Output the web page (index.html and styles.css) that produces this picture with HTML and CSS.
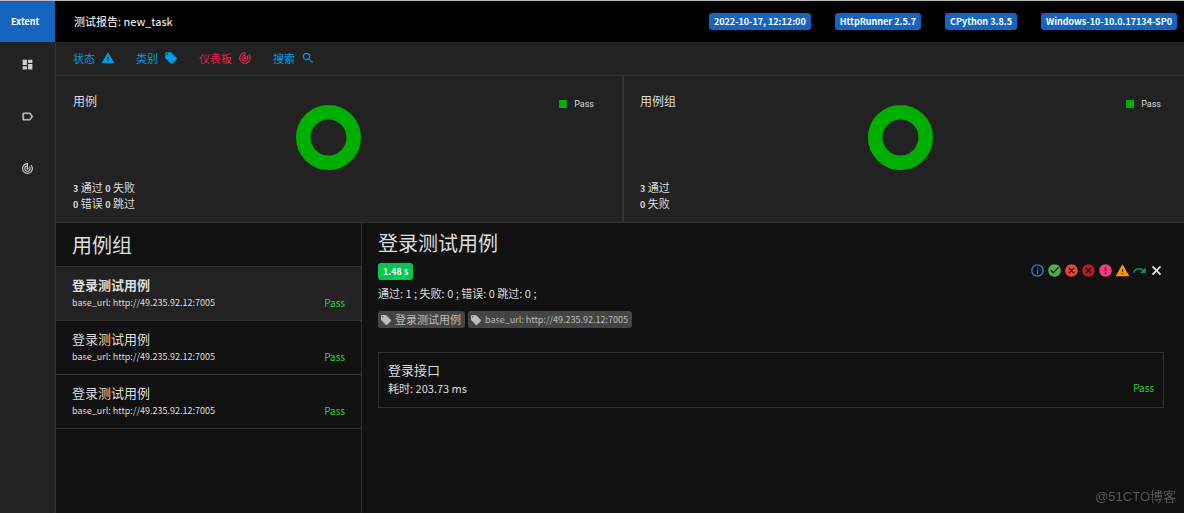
FILE: index.html
```html
<!DOCTYPE html>
<html lang="zh-CN">
<head>
<meta charset="utf-8">
<meta name="viewport" content="width=device-width, initial-scale=1">
<title>测试报告: new_task</title>
<link rel="stylesheet" href="styles.css">
</head>
<body>
<svg class="sprite" aria-hidden="true">
  <symbol id="dashboard" viewBox="0 0 24 24"><path d="M3 13h8V3H3v10zm0 8h8v-6H3v6zm10 0h8V11h-8v10zm0-18v6h8V3h-8z"/></symbol>
  <symbol id="label" viewBox="0 0 24 24"><path stroke="currentColor" stroke-width="0.8" d="M17.63 5.84C17.27 5.33 16.67 5 16 5L5 5.01C3.9 5.01 3 5.9 3 7v10c0 1.1.9 1.99 2 1.99L16 19c.67 0 1.27-.33 1.63-.84L22 12l-4.37-6.16zM16 17H5V7h11l3.55 5L16 17z"/></symbol>
  <symbol id="track" viewBox="0 0 24 24"><path d="M19.07 4.93l-1.41 1.41C19.1 7.79 20 9.79 20 12c0 4.42-3.58 8-8 8s-8-3.58-8-8c0-4.08 3.05-7.44 7-7.93v2.02C8.16 6.57 6 9.03 6 12c0 3.31 2.69 6 6 6s6-2.69 6-6c0-1.66-.67-3.16-1.76-4.24l-1.41 1.41C15.55 9.9 16 10.9 16 12c0 2.21-1.79 4-4 4s-4-1.79-4-4c0-1.86 1.28-3.41 3-3.86v2.14c-.6.35-1 .98-1 1.72 0 1.1.9 2 2 2s2-.9 2-2c0-.74-.4-1.38-1-1.72V2h-1C6.48 2 2 6.48 2 12s4.48 10 10 10 10-4.48 10-10c0-2.76-1.12-5.26-2.93-7.07z"/></symbol>
  <symbol id="warning" viewBox="0 0 24 24"><path d="M1 21h22L12 2 1 21zm12-3h-2v-2h2v2zm0-4h-2v-4h2v4z"/></symbol>
  <symbol id="tag" viewBox="0 0 24 24"><path d="M21.41 11.58l-9-9C12.05 2.22 11.55 2 11 2H4c-1.1 0-2 .9-2 2v7c0 .55.22 1.05.59 1.42l9 9c.36.36.86.58 1.41.58.55 0 1.05-.22 1.41-.59l7-7c.37-.36.59-.86.59-1.41 0-.55-.23-1.06-.59-1.42zM5.5 7C4.67 7 4 6.33 4 5.5S4.67 4 5.5 4 7 4.67 7 5.5 6.33 7 5.5 7z"/></symbol>
  <symbol id="search" viewBox="0 0 24 24"><path d="M15.5 14h-.79l-.28-.27C15.41 12.59 16 11.11 16 9.5 16 5.91 13.09 3 9.5 3S3 5.91 3 9.5 5.91 16 9.5 16c1.61 0 3.09-.59 4.23-1.57l.27.28v.79l5 4.99L20.49 19l-4.99-5zm-6 0C7.01 14 5 11.99 5 9.5S7.01 5 9.5 5 14 7.01 14 9.5 11.99 14 9.5 14z"/></symbol>
  <symbol id="info" viewBox="0 0 24 24"><path d="M11 17h2v-6h-2v6zm1-15C6.48 2 2 6.48 2 12s4.48 10 10 10 10-4.48 10-10S17.52 2 12 2zm0 18c-4.41 0-8-3.59-8-8s3.59-8 8-8 8 3.59 8 8-3.59 8-8 8zM11 9h2V7h-2v2z"/></symbol>
  <symbol id="check" viewBox="0 0 24 24"><path d="M12 2C6.48 2 2 6.48 2 12s4.48 10 10 10 10-4.48 10-10S17.52 2 12 2zm-2 15l-5-5 1.41-1.41L10 14.17l7.59-7.59L19 8l-9 9z"/></symbol>
  <symbol id="cancel" viewBox="0 0 24 24"><path d="M12 2C6.47 2 2 6.47 2 12s4.47 10 10 10 10-4.47 10-10S17.53 2 12 2zm5 13.59L15.59 17 12 13.41 8.41 17 7 15.59 10.59 12 7 8.41 8.41 7 12 10.59 15.59 7 17 8.41 13.41 12 17 15.59z"/></symbol>
  <symbol id="error" viewBox="0 0 24 24"><path d="M12 2C6.48 2 2 6.48 2 12s4.48 10 10 10 10-4.48 10-10S17.52 2 12 2zm1 15h-2v-2h2v2zm0-4h-2V7h2v6z"/></symbol>
  <symbol id="redo" viewBox="0 0 24 24"><path d="M18.4 10.6C16.55 8.99 14.15 8 11.5 8c-4.65 0-8.58 3.03-9.96 7.22L3.9 16c1.05-3.19 4.05-5.5 7.6-5.5 1.95 0 3.73.72 5.12 1.88L13 16h9V7l-3.6 3.6z"/></symbol>
  <symbol id="close" viewBox="0 0 24 24"><path stroke="currentColor" stroke-width="0.8" d="M19 6.41L17.59 5 12 10.59 6.41 5 5 6.41 10.59 12 5 17.59 6.41 19 12 13.41 17.59 19 19 17.59 13.41 12z"/></symbol>
  <symbol id="donut" viewBox="0 0 65 65"><circle cx="32.5" cy="32.5" r="25.2" fill="none" stroke="#00af00" stroke-width="14.6"/></symbol>
</svg>

<div class="app">
  <header class="topbar">
    <a class="brand" href="#">Extent</a>
    <h1 class="report-name">测试报告: new_task</h1>
    <ul class="env">
      <li class="badge">2022-10-17, 12:12:00</li>
      <li class="badge">HttpRunner 2.5.7</li>
      <li class="badge">CPython 3.8.5</li>
      <li class="badge">Windows-10-10.0.17134-SP0</li>
    </ul>
  </header>

  <div class="body">
    <nav class="side" aria-label="视图">
      <a href="#" aria-label="用例组"><svg class="icon"><use href="#dashboard"/></svg></a>
      <a href="#" aria-label="类别"><svg class="icon"><use href="#label"/></svg></a>
      <a href="#" aria-label="仪表板"><svg class="icon"><use href="#track"/></svg></a>
    </nav>

    <main class="main">
      <nav class="toolbar" aria-label="工具">
        <a href="#">状态<svg class="icon"><use href="#warning"/></svg></a>
        <a href="#">类别<svg class="icon"><use href="#tag"/></svg></a>
        <a href="#" class="active">仪表板<svg class="icon"><use href="#track"/></svg></a>
        <a href="#">搜索<svg class="icon"><use href="#search"/></svg></a>
      </nav>

      <div class="charts">
        <section class="card">
          <div class="chart">
            <h2>用例</h2>
            <svg class="donut" role="img" aria-label="Pass"><use href="#donut"/></svg>
            <span class="legend">Pass</span>
          </div>
          <p><b>3</b> 通过 <b>0</b> 失败</p>
          <p><b>0</b> 错误 <b>0</b> 跳过</p>
        </section>
        <section class="card card-groups">
          <div class="chart">
            <h2>用例组</h2>
            <svg class="donut" role="img" aria-label="Pass"><use href="#donut"/></svg>
            <span class="legend">Pass</span>
          </div>
          <p><b>3</b> 通过</p>
          <p><b>0</b> 失败</p>
        </section>
      </div>

      <div class="panes">
        <section class="suites">
          <h2 class="heading">用例组</h2>
          <ul>
            <li class="suite selected">
              <h3>登录测试用例</h3>
              <div class="row"><span>base_url: http://49.235.92.12:7005</span><span class="pass">Pass</span></div>
            </li>
            <li class="suite">
              <h3>登录测试用例</h3>
              <div class="row"><span>base_url: http://49.235.92.12:7005</span><span class="pass">Pass</span></div>
            </li>
            <li class="suite">
              <h3>登录测试用例</h3>
              <div class="row"><span>base_url: http://49.235.92.12:7005</span><span class="pass">Pass</span></div>
            </li>
          </ul>
        </section>

        <section class="detail">
          <h2 class="heading">登录测试用例</h2>
          <div class="meta">
            <span class="badge time">1.48 s</span>
            <div class="filters">
              <button type="button" class="c-info" aria-label="信息"><svg class="icon"><use href="#info"/></svg></button>
              <button type="button" class="c-pass" aria-label="通过"><svg class="icon"><use href="#check"/></svg></button>
              <button type="button" class="c-fail" aria-label="失败"><svg class="icon"><use href="#cancel"/></svg></button>
              <button type="button" class="c-fatal" aria-label="致命"><svg class="icon"><use href="#cancel"/></svg></button>
              <button type="button" class="c-error" aria-label="错误"><svg class="icon"><use href="#error"/></svg></button>
              <button type="button" class="c-warn" aria-label="警告"><svg class="icon"><use href="#warning"/></svg></button>
              <button type="button" class="c-skip" aria-label="跳过"><svg class="icon"><use href="#redo"/></svg></button>
              <button type="button" class="c-clear" aria-label="清除"><svg class="icon"><use href="#close"/></svg></button>
            </div>
          </div>
          <p class="counts">通过: 1 ; 失败: 0 ; 错误: 0 跳过: 0 ;</p>
          <div class="tags">
            <span class="tag tag-name"><svg class="icon"><use href="#tag"/></svg>登录测试用例</span>
            <span class="tag"><svg class="icon"><use href="#tag"/></svg>base_url: http://49.235.92.12:7005</span>
          </div>
          <article class="test">
            <h3>登录接口</h3>
            <div class="row"><span class="elapsed">耗时: 203.73 ms</span><span class="pass">Pass</span></div>
          </article>
        </section>
      </div>
    </main>
  </div>
</div>
<div class="watermark">@51CTO博客</div>
</body>
</html>
```

FILE: styles.css
```css
* { box-sizing: border-box; }

body {
  margin: 0;
  background: #111;
  color: #ddd;
  font: 9px/16px "Noto Sans CJK SC", "Noto Sans", sans-serif;
}

h1, h2, h3, p, ul { margin: 0; padding: 0; font-weight: 400; }
ul { list-style: none; }
a { color: inherit; text-decoration: none; }
.sprite { position: absolute; width: 0; height: 0; }
.icon { display: block; flex: none; width: 14px; height: 14px; fill: currentColor; }

.app { display: flex; flex-direction: column; min-height: 100vh; border-top: 1px solid #bbb; }

/* Top bar */
.topbar { display: flex; align-items: center; height: 41px; padding-right: 7px; background: #000; color: #fff; }
.brand {
  display: flex; align-items: center; align-self: stretch;
  width: 55px; padding-left: 11px;
  background: #1565c0; font-weight: 700;
}
.report-name { margin-left: 19px; padding-bottom: 2px; font-size: 11px; }
.env { display: flex; gap: 24px; margin-left: auto; }
.badge {
  display: block; padding: 0 5px;
  border-radius: 3px; background: #1565c0; color: #fff;
  line-height: 17px; font-weight: 700; white-space: nowrap;
}

/* Side navigation */
.body { display: flex; flex: 1; }
.side { display: flex; flex-direction: column; flex: none; width: 56px; background: #222; border-right: 1px solid #333; }
.side a { display: grid; place-items: center; height: 52px; color: #ccc; }
.side a:first-child { height: 44px; margin-bottom: 4px; }
.side .icon { width: 13px; height: 13px; }

/* Toolbar */
.main { display: flex; flex-direction: column; flex: 1; min-width: 0; }
.toolbar {
  display: flex; gap: 21px; height: 34px; padding: 0 17px 2px;
  background: #222; border-bottom: 1px solid #333; color: #039be5; font-size: 11px;
}
.toolbar a { display: flex; align-items: center; gap: 6px; }
.toolbar .active { color: #e91e56; }

/* Chart cards */
.charts { display: grid; grid-template-columns: 567fr 561fr; background: #222; border-bottom: 1px solid #333; }
.card { padding: 17px 28px 11px 17px; border-right: 1px solid #333; font-size: 11px; }
.card-groups { padding: 17px 23px 11px 16px; border-right: 0; border-left: 1px solid #333; }
.chart { display: grid; grid-template-columns: 49fr 65px 51fr; height: 86px; }
.card-groups .chart { grid-template-columns: 1fr 65px 1fr; }
.card h2 { font-size: 12px; }
.card b { font-size: 9px; line-height: 1px; }
.donut { width: 65px; height: 65px; margin-top: 12px; }
.legend { display: flex; gap: 7px; justify-self: end; align-self: start; align-items: center; margin-top: 3px; font: 9px/16px Roboto, sans-serif; }
.legend::before { content: ""; width: 8px; height: 8px; border-radius: 1px; background: #00af00; }

/* Suite list */
.panes { display: flex; flex: 1; }
.suites { flex: none; width: 306px; border-right: 1px solid #333; }
.heading { font-size: 20px; line-height: 43px; }
.suites .heading { padding-left: 16px; border-bottom: 1px solid #333; }
.suite { padding: 8px 16px 9px; border-bottom: 1px solid #333; }
.suite h3, .test h3 { font-size: 13px; line-height: 20px; }
.row { display: flex; justify-content: space-between; }
.pass { color: #32cd32; font-size: 10px; }
.selected { background: #222; }
.selected h3 { font-weight: 700; }

/* Suite detail */
.detail { flex: 1; min-width: 0; padding: 0 20px 20px 16px; }
.detail .heading { line-height: 40px; }
.meta { display: flex; justify-content: space-between; align-items: flex-start; }
.time { background: #00c853; }
.filters { display: flex; gap: 2px; }
.filters .icon { width: 15px; height: 15px; }
.filters button { padding: 0; border: 0; background: none; }
.filters .c-info { color: #1e88e5; }
.filters .c-pass { color: #4caf50; }
.filters .c-fail { color: #f44336; }
.filters .c-fatal { color: #b71c1c; }
.filters .c-error { color: #ec407a; }
.filters .c-warn { color: #ff9800; }
.filters .c-skip { color: #009688; }
.filters .c-clear { color: #eee; }
.counts { margin-top: 5px; font-size: 11px; }
.tags { display: flex; gap: 3px; margin-top: 10px; }
.tag { display: flex; align-items: center; gap: 3px; padding: 0 4px 0 2px; border-radius: 3px; background: #444; color: #bbb; line-height: 17px; }
.tag .icon { width: 12px; height: 12px; }
.tag-name, .elapsed { font-size: 11px; }
.test { margin-top: 24px; padding: 7px 9px 11px; border: 1px solid #333; }

.watermark { position: fixed; right: 8px; bottom: 6px; color: #555; font: 13px/20px "Liberation Sans", "Noto Sans CJK SC", sans-serif; }
```
